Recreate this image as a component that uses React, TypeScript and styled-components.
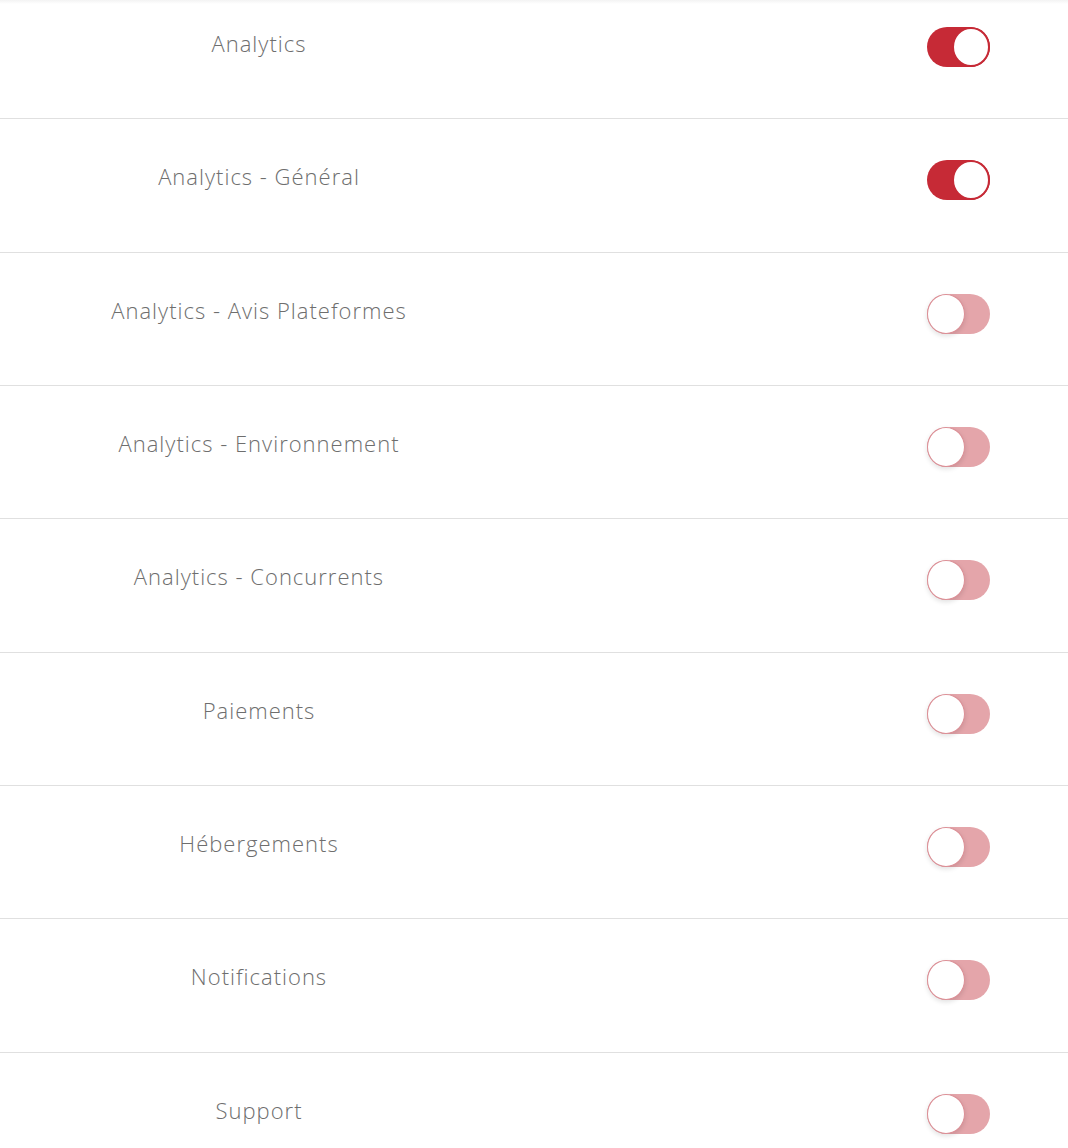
import styled, { createGlobalStyle } from "styled-components";

interface Permission {
  label: string;
  enabled: boolean;
}

const permissions: Permission[] = [
  { label: "Analytics", enabled: true },
  { label: "Analytics - Général", enabled: true },
  { label: "Analytics - Avis Plateformes", enabled: false },
  { label: "Analytics - Environnement", enabled: false },
  { label: "Analytics - Concurrents", enabled: false },
  { label: "Paiements", enabled: false },
  { label: "Hébergements", enabled: false },
  { label: "Notifications", enabled: false },
  { label: "Support", enabled: false },
];

const GlobalStyle = createGlobalStyle`
  html, body {
    margin: 0;
    padding: 0;
    background: #fff;
    font-family: "Open Sans", "Liberation Sans", sans-serif;
  }
`;

const Page = styled.div`
  position: relative;
  width: 1068px;
  height: 1148px;
  overflow: hidden;
  background: #fff;
`;

const TopShade = styled.div`
  position: absolute;
  top: 0;
  left: 0;
  right: 0;
  height: 4px;
  background: linear-gradient(#f3f3f3, rgba(255, 255, 255, 0));
  z-index: 1;
`;

// the list is scrolled a little, so the first row is cut at the top
const List = styled.div`
  display: flex;
  flex-direction: column;
  margin-top: -14.1px;
`;

const Row = styled.div`
  display: grid;
  grid-template-columns: 518px 1fr;
  align-items: start;
  box-sizing: border-box;
  height: 133.333px;
  padding: 41px 78px 0 0;
  border-bottom: 1px solid #e0e0e0;
  flex-shrink: 0;
`;

const Label = styled.span`
  text-align: center;
  font-size: 22px;
  font-weight: 300;
  letter-spacing: 1px;
  line-height: 33px;
  color: #6e6e6e;
`;

const Track = styled.div<{ $on: boolean }>`
  justify-self: end;
  position: relative;
  width: 63px;
  height: 40px;
  border-radius: 20px;
  background: ${(p) => (p.$on ? "#c62a36" : "#e4a5aa")};
`;

const Knob = styled.span<{ $on: boolean }>`
  position: absolute;
  top: 0;
  ${(p) => (p.$on ? "right: 0;" : "left: 0;")}
  box-sizing: border-box;
  width: 38px;
  height: 40px;
  border-radius: 50%;
  background: #fff;
  border: ${(p) => (p.$on ? "2px solid #c62a36" : "1px solid #dc8f96")};
  box-shadow: ${(p) => (p.$on ? "none" : "0 2px 5px rgba(0, 0, 0, 0.12)")};
`;

export default function App() {
  return (
    <Page>
      <GlobalStyle />
      <TopShade />
      <List>
        {permissions.map((perm) => (
          <Row key={perm.label}>
            <Label>{perm.label}</Label>
            <Track $on={perm.enabled}>
              <Knob $on={perm.enabled} />
            </Track>
          </Row>
        ))}
      </List>
    </Page>
  );
}
